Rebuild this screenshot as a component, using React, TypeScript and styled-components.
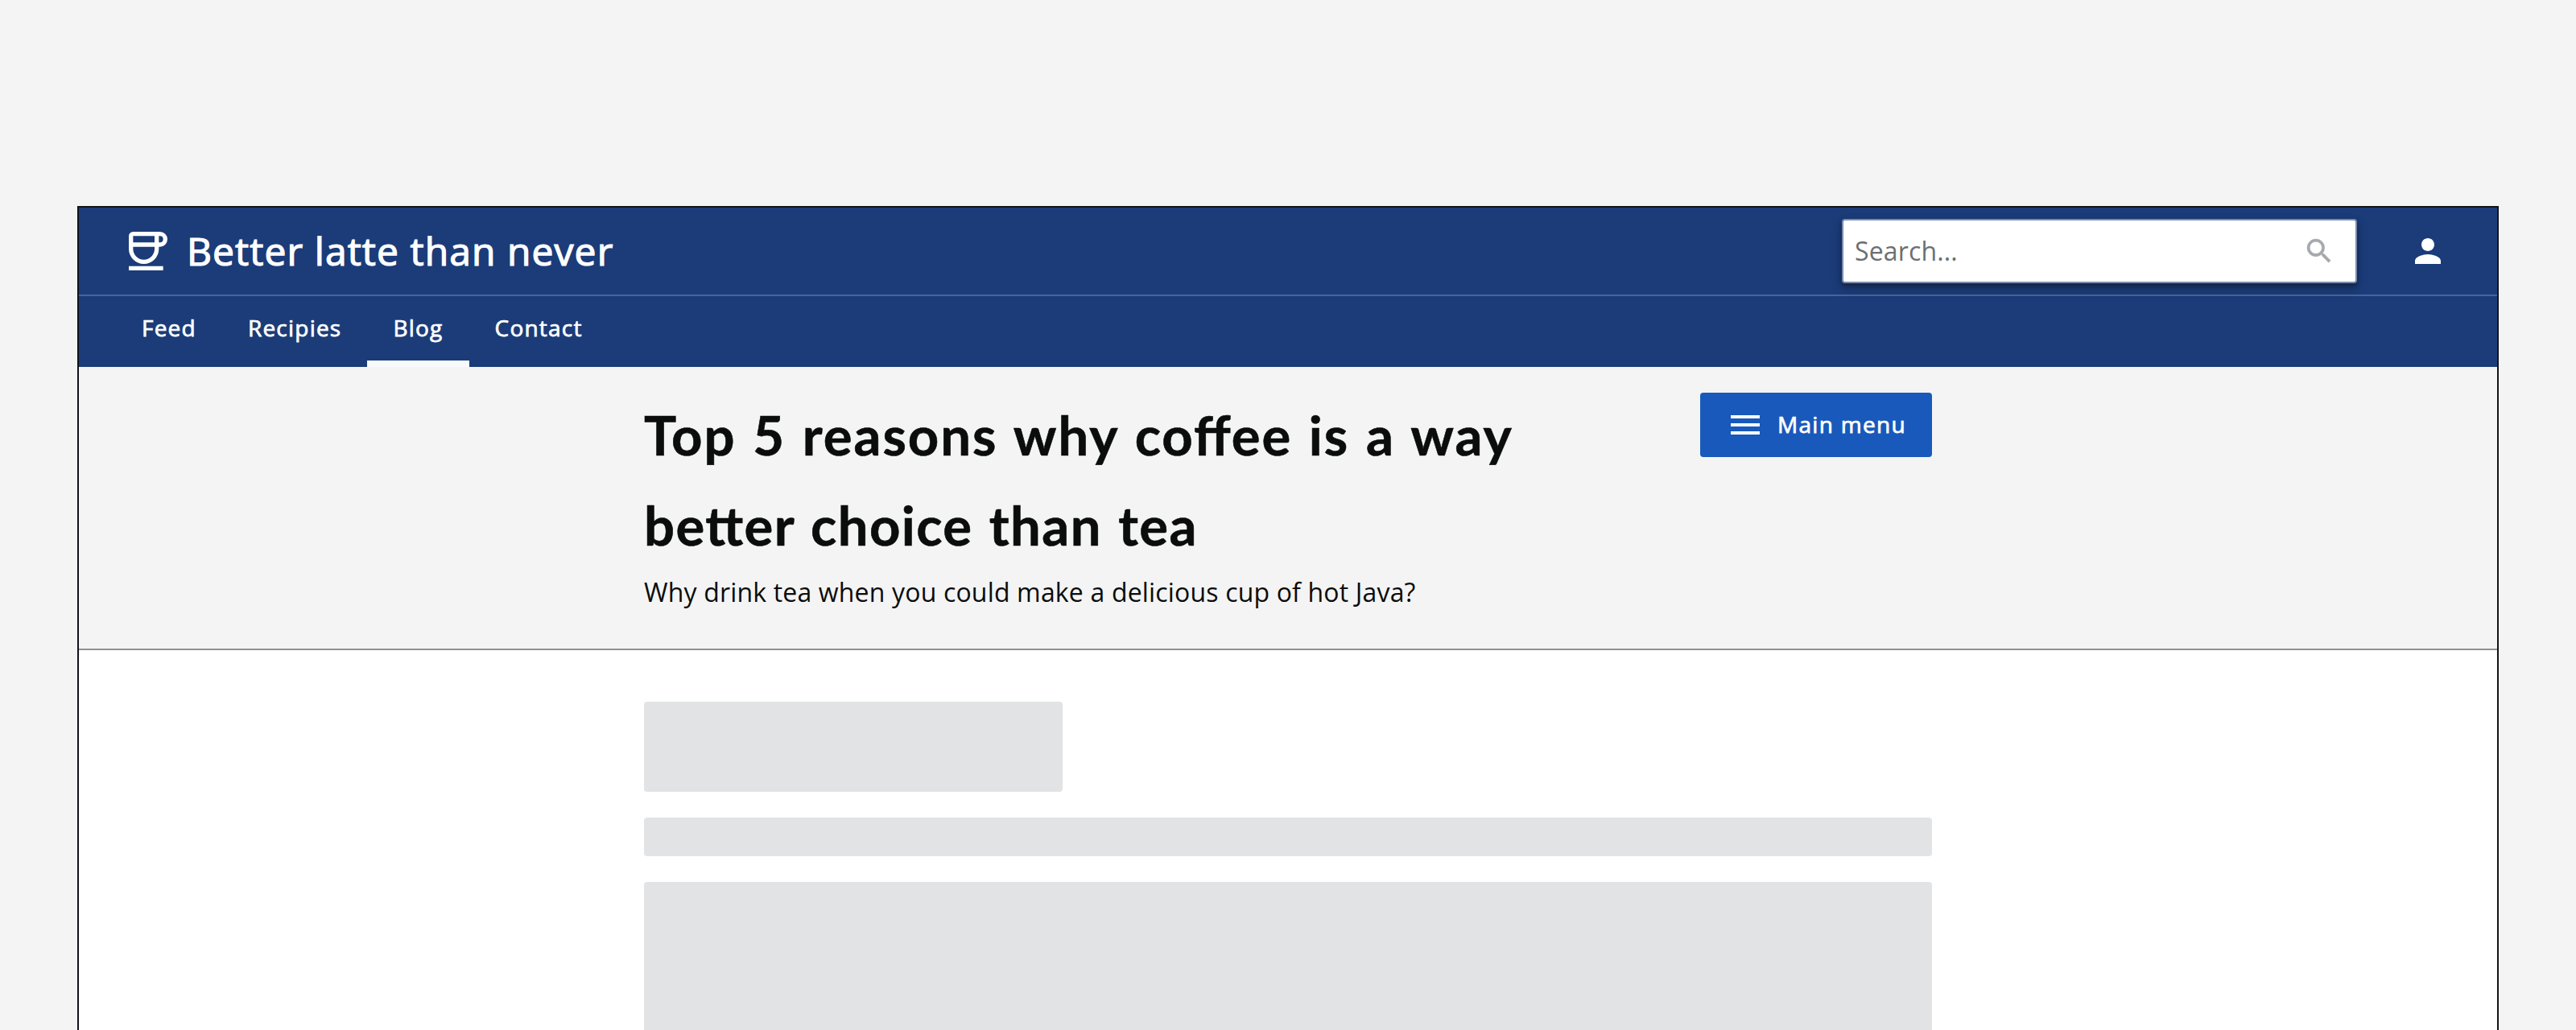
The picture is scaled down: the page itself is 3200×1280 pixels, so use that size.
import React from "react";
import styled, { createGlobalStyle } from "styled-components";

const GlobalStyle = createGlobalStyle`
  *, *::before, *::after { box-sizing: border-box; }
  body {
    margin: 0;
    background: #f4f4f4;
    color: #0b0c0c;
    font-family: "Open Sans", "Noto Sans", sans-serif;
  }
  h1, p { margin: 0; }
`;

const Canvas = styled.div`
  height: 1280px;
  padding: 256px 96px 0;
  overflow: hidden;
`;

const Frame = styled.div`
  height: 1100px;
  border: 2px solid #111318;
  background: #fff;
`;

const Header = styled.header`
  background: #1b3c79;
  color: #fff;
`;

const TopBar = styled.div`
  display: flex;
  align-items: center;
  height: 110px;
  padding: 0 62px;
  border-bottom: 2px solid #4a639a;
`;

const Brand = styled.div`
  display: flex;
  align-items: center;
  gap: 24px;
  flex: 1;
`;

const BrandName = styled.span`
  font-size: 48px;
  line-height: 64px;
  letter-spacing: 1.07px;
  -webkit-text-stroke: 1.2px currentColor;
`;

const SearchField = styled.label`
  display: flex;
  align-items: center;
  justify-content: space-between;
  width: 640px;
  height: 80px;
  padding: 0 25px 0 14px;
  margin-right: 64px;
  border: 2px solid #7b8cae;
  border-radius: 4px;
  background: #fff;
  box-shadow: 0 3px 5px rgba(20, 28, 48, 0.6), 0 6px 12px rgba(20, 28, 48, 0.4);
`;

const SearchInput = styled.input`
  flex: 1;
  min-width: 0;
  padding: 0;
  border: 0;
  outline: 0;
  background: transparent;
  font: 400 32px/48px "Open Sans", "Noto Sans", sans-serif;
  letter-spacing: 0.15px;
  &::placeholder { color: #6c6f73; opacity: 1; }
`;

const Icon = styled.svg<{ $size: number }>`
  display: block;
  flex: none;
  width: ${(p) => p.$size}px;
  height: ${(p) => p.$size}px;
`;

const Nav = styled.nav`
  display: flex;
  height: 88px;
  padding: 0 46px;
`;

const NavItem = styled.a<{ $active?: boolean }>`
  padding: 0 32px 2px;
  border-bottom: 8px solid ${(p) => (p.$active ? "#f7f9fd" : "transparent")};
  font-size: 28px;
  line-height: 78px;
  letter-spacing: 1.22px;
  -webkit-text-stroke: 0.75px currentColor;
`;

const Intro = styled.section`
  display: flex;
  justify-content: center;
  height: 352px;
  padding-top: 32px;
  border-bottom: 2px solid #909090;
  background: #f4f4f4;
`;

const IntroInner = styled.div`
  display: flex;
  align-items: flex-start;
  justify-content: space-between;
  width: 1600px;
`;

const Title = styled.h1`
  margin: -4px 0 4px;
  font-family: Lato, "Open Sans", sans-serif;
  font-size: 67px;
  font-weight: 700;
  line-height: 112px;
  font-feature-settings: "liga" 1;
  word-spacing: 2.5px;
  -webkit-text-stroke: 0.6px currentColor;
`;

const TitleLine = styled.span<{ $tracking: number }>`
  display: block;
  letter-spacing: ${(p) => p.$tracking}px;
`;

const Subtitle = styled.p`
  font-size: 32px;
  line-height: 48px;
  letter-spacing: 0.17px;
`;

const MenuButton = styled.button`
  display: flex;
  align-items: center;
  gap: 16px;
  width: 288px;
  height: 80px;
  padding: 0 32px;
  border: 0;
  border-radius: 4px;
  background: #1859bb;
  color: #fff;
  white-space: nowrap;
`;

const MenuLabel = styled.span`
  padding-bottom: 2px;
  font: 400 28px/40px "Open Sans", "Noto Sans", sans-serif;
  letter-spacing: 1.3px;
  -webkit-text-stroke: 0.75px currentColor;
`;

const Content = styled.main`
  display: flex;
  flex-direction: column;
  gap: 32px;
  width: 1600px;
  margin: 64px auto 0;
`;

const Skeleton = styled.div<{ $width?: string; $height: number }>`
  width: ${(p) => p.$width ?? "100%"};
  height: ${(p) => p.$height}px;
  border-radius: 4px;
  background: #e1e3e4;
`;

const navItems = ["Feed", "Recipies", "Blog", "Contact"];

export default function App() {
  return (
    <>
      <GlobalStyle />
      <Canvas>
        <Frame>
          <Header>
            <TopBar>
              <Brand>
                <Icon $size={48} viewBox="0 0 18 18" fill="none" stroke="currentColor" strokeWidth="2">
                  <path d="M1 2a1 1 0 0 1 1-1H14.5A2.5 2.5 0 0 1 14.5 6H13V8A6 6 0 0 1 1 8ZM13 1V6M1 6H13M0 17H16" />
                </Icon>
                <BrandName>Better latte than never</BrandName>
              </Brand>
              <SearchField>
                <SearchInput placeholder="Search..." />
                <Icon $size={40} viewBox="0 0 24 24" fill="#a5a8ac">
                  <path stroke="#a5a8ac" strokeWidth=".3" d="M15.5 14h-.79l-.28-.27A6.47 6.47 0 0 0 16 9.5 6.5 6.5 0 1 0 9.5 16c1.61 0 3.09-.59 4.23-1.57l.27.28v.79l5 4.99L20.49 19l-4.99-5zm-6 0C7.01 14 5 11.99 5 9.5S7.01 5 9.5 5 14 7.01 14 9.5 11.99 14 9.5 14z" />
                </Icon>
              </SearchField>
              <Icon $size={48} viewBox="0 0 24 24" fill="currentColor">
                <path d="M12 12c2.21 0 4-1.79 4-4s-1.79-4-4-4-4 1.79-4 4 1.79 4 4 4zm0 2c-2.67 0-8 1.34-8 4v2h16v-2c0-2.66-5.33-4-8-4z" />
              </Icon>
            </TopBar>
            <Nav>
              {navItems.map((label) => (
                <NavItem key={label} $active={label === "Blog"}>{label}</NavItem>
              ))}
            </Nav>
          </Header>
          <Intro>
            <IntroInner>
              <div>
                <Title>
                  <TitleLine $tracking={1.95}>Top 5 reasons why coffee is a way</TitleLine>
                  <TitleLine $tracking={1.42}>better choice than tea</TitleLine>
                </Title>
                <Subtitle>Why drink tea when you could make a delicious cup of hot Java?</Subtitle>
              </div>
              <MenuButton>
                <Icon $size={48} viewBox="0 0 24 24" fill="currentColor">
                  <path d="M3 18h18v-2H3v2zm0-5h18v-2H3v2zm0-7v2h18V6H3z" />
                </Icon>
                <MenuLabel>Main menu</MenuLabel>
              </MenuButton>
            </IntroInner>
          </Intro>
          <Content>
            <Skeleton $width="520px" $height={112} />
            <Skeleton $height={48} />
            <Skeleton $height={400} />
          </Content>
        </Frame>
      </Canvas>
    </>
  );
}
